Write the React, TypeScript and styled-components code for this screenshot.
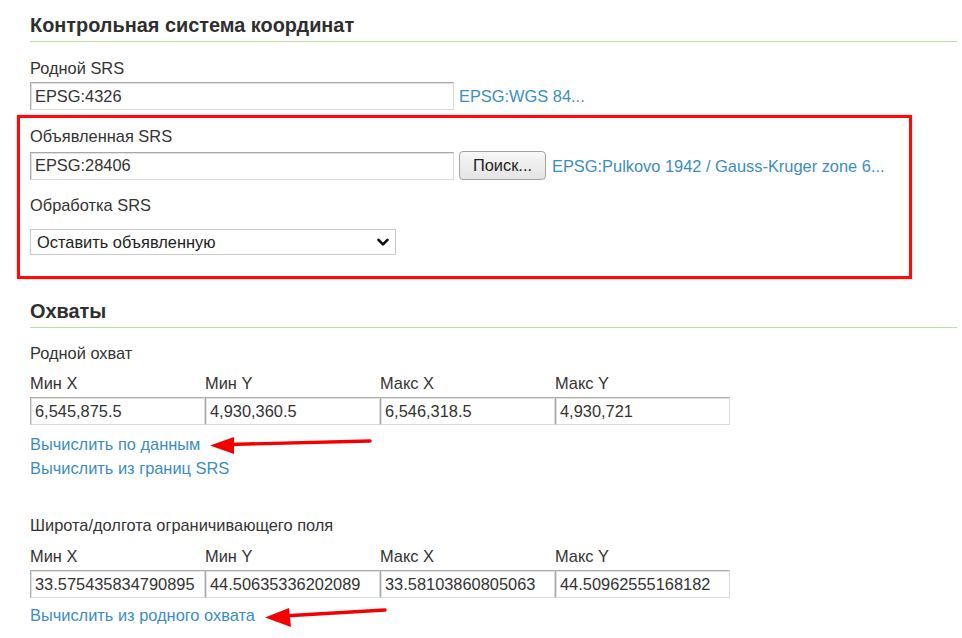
import React from "react";
import styled, { createGlobalStyle } from "styled-components";

const GlobalStyle = createGlobalStyle`
  html, body { margin: 0; padding: 0; background: #fff; }
  body {
    font-family: "Liberation Sans", Arial, sans-serif;
    color: #333;
    font-size: 16.4px;
  }
  * { box-sizing: border-box; }
`;

const Page = styled.div`
  position: relative;
  width: 962px;
  height: 638px;
  overflow: hidden;
  padding: 13px 5px 0 30px;
`;

const SectionTitle = styled.h2<{ $top?: number }>`
  margin: ${(p) => p.$top ?? 0}px 0 0 0;
  font-size: 19.9px;
  font-weight: bold;
  line-height: 24px;
  padding-bottom: 4px;
  color: #2f2f2f;
  border-bottom: 1px solid #bde09a;
`;

const Label = styled.div<{ $top?: number; $gap?: number }>`
  margin-top: ${(p) => p.$top ?? 0}px;
  margin-bottom: ${(p) => p.$gap ?? 0}px;
  font-size: 16.4px;
  line-height: 20px;
  color: #333;
  white-space: nowrap;
`;

const Row = styled.div`
  display: flex;
  align-items: center;
`;

const TextInput = styled.input<{ $w: number; $h?: number }>`
  width: ${(p) => p.$w}px;
  height: ${(p) => p.$h ?? 28}px;
  margin: 0;
  padding: 0 4px;
  font-family: "Liberation Sans", Arial, sans-serif;
  font-size: 16.4px;
  color: #333;
  background: #fff;
  border: 1px solid;
  border-color: #a9a9a9 #dadada #dadada #a9a9a9;
  box-shadow: inset 1px 1px 0 #e2e2e2;
  border-radius: 0;
  outline: none;
`;

const Link = styled.a<{ $block?: boolean; $top?: number; $left?: number }>`
  display: ${(p) => (p.$block ? "block" : "inline-block")};
  margin-top: ${(p) => p.$top ?? 0}px;
  margin-left: ${(p) => p.$left ?? 0}px;
  color: #3a8dbf;
  text-decoration: none;
  font-size: 16.4px;
  line-height: ${(p) => (p.$block ? "24px" : "20px")};
  white-space: nowrap;
  cursor: pointer;
  width: fit-content;
`;

const Button = styled.button`
  width: 87px;
  height: 29px;
  margin: 0 0 0 5px;
  padding: 0;
  font-family: "Liberation Sans", Arial, sans-serif;
  font-size: 16.4px;
  color: #222;
  border: 1px solid #a3a3a3;
  border-radius: 4px;
  background: linear-gradient(#f7f7f7, #e4e4e4);
  cursor: pointer;
`;

const Highlight = styled.div`
  margin: 5px 0 0 -13px;
  width: 895px;
  border: 3px solid #ff0a0a;
  padding: 8px 0 21px 10px;
  box-shadow: 0 0 1px #ff6060;
`;

const SelectWrap = styled.div`
  position: relative;
  width: 366px;
  height: 26px;
`;

const Select = styled.select`
  appearance: none;
  -webkit-appearance: none;
  width: 100%;
  height: 100%;
  margin: 0;
  padding: 0 0 0 6px;
  font-family: "Liberation Sans", Arial, sans-serif;
  font-size: 16.4px;
  color: #222;
  background: #fff;
  border: 1px solid #c9c9c9;
  border-radius: 0;
  outline: none;
`;

const Chevron = styled.svg`
  position: absolute;
  right: 7px;
  top: 9px;
  width: 12px;
  height: 9px;
  pointer-events: none;
`;

const BoundsGrid = styled.div<{ $top: number }>`
  margin-top: ${(p) => p.$top}px;
  display: grid;
  grid-template-columns: repeat(4, 175px);
`;

const BoundsCell = styled.div`
  display: flex;
  flex-direction: column;
  gap: 4px;
`;

const Overlay = styled.svg`
  position: absolute;
  left: 0;
  top: 0;
  width: 962px;
  height: 638px;
  pointer-events: none;
`;

const cols = ["Мин X", "Мин Y", "Макс X", "Макс Y"];

function Bounds({ top, values }: { top: number; values: string[] }) {
  return (
    <BoundsGrid $top={top}>
      {cols.map((c, i) => (
        <BoundsCell key={c}>
          <Label>{c}</Label>
          <TextInput $w={175} readOnly value={values[i]} />
        </BoundsCell>
      ))}
    </BoundsGrid>
  );
}

export default function App() {
  return (
    <>
      <GlobalStyle />
      <Page>
        <SectionTitle>Контрольная система координат</SectionTitle>

        <Label $top={16} $gap={4}>Родной SRS</Label>
        <Row>
          <TextInput $w={424} readOnly value="EPSG:4326" />
          <Link $left={5}>EPSG:WGS 84...</Link>
        </Row>

        <Highlight>
          <Label $gap={5}>Объявленная SRS</Label>
          <Row>
            <TextInput $w={424} readOnly value="EPSG:28406" />
            <Button>Поиск...</Button>
            <Link $left={6}>EPSG:Pulkovo 1942 / Gauss-Kruger zone 6...</Link>
          </Row>
          <Label $top={15} $gap={14}>Обработка SRS</Label>
          <SelectWrap>
            <Select defaultValue="keep">
              <option value="keep">Оставить объявленную</option>
              <option value="force">Принудительно объявленную</option>
              <option value="reproject">Перепроецировать</option>
            </Select>
            <Chevron viewBox="0 0 12 9">
              <polyline
                points="1.5,1.8 6,6.3 10.5,1.8"
                fill="none"
                stroke="#111"
                strokeWidth="2.6"
                strokeLinecap="round"
                strokeLinejoin="round"
              />
            </Chevron>
          </SelectWrap>
        </Highlight>

        <SectionTitle $top={20}>Охваты</SectionTitle>

        <Label $top={15}>Родной охват</Label>
        <Bounds top={10} values={["6,545,875.5", "4,930,360.5", "6,546,318.5", "4,930,721"]} />
        <Link $block $top={7}>Вычислить по данным</Link>
        <Link $block>Вычислить из границ SRS</Link>

        <Label $top={35}>Широта/долгота ограничивающего поля</Label>
        <Bounds
          top={11}
          values={["33.575435834790895", "44.50635336202089", "33.58103860805063", "44.50962555168182"]}
        />
        <Link $block $top={5}>Вычислить из родного охвата</Link>

        <Overlay viewBox="0 0 962 638">
          <line x1="370" y1="441" x2="228" y2="444.5" stroke="#f40000" strokeWidth="3.4" strokeLinecap="round" />
          <polygon points="210,445.5 234,437 234,454" fill="#f40000" />
          <line x1="385" y1="610" x2="283" y2="616" stroke="#f40000" strokeWidth="3.4" strokeLinecap="round" />
          <polygon points="265,617.5 289,608 291,627" fill="#f40000" />
        </Overlay>
      </Page>
    </>
  );
}
